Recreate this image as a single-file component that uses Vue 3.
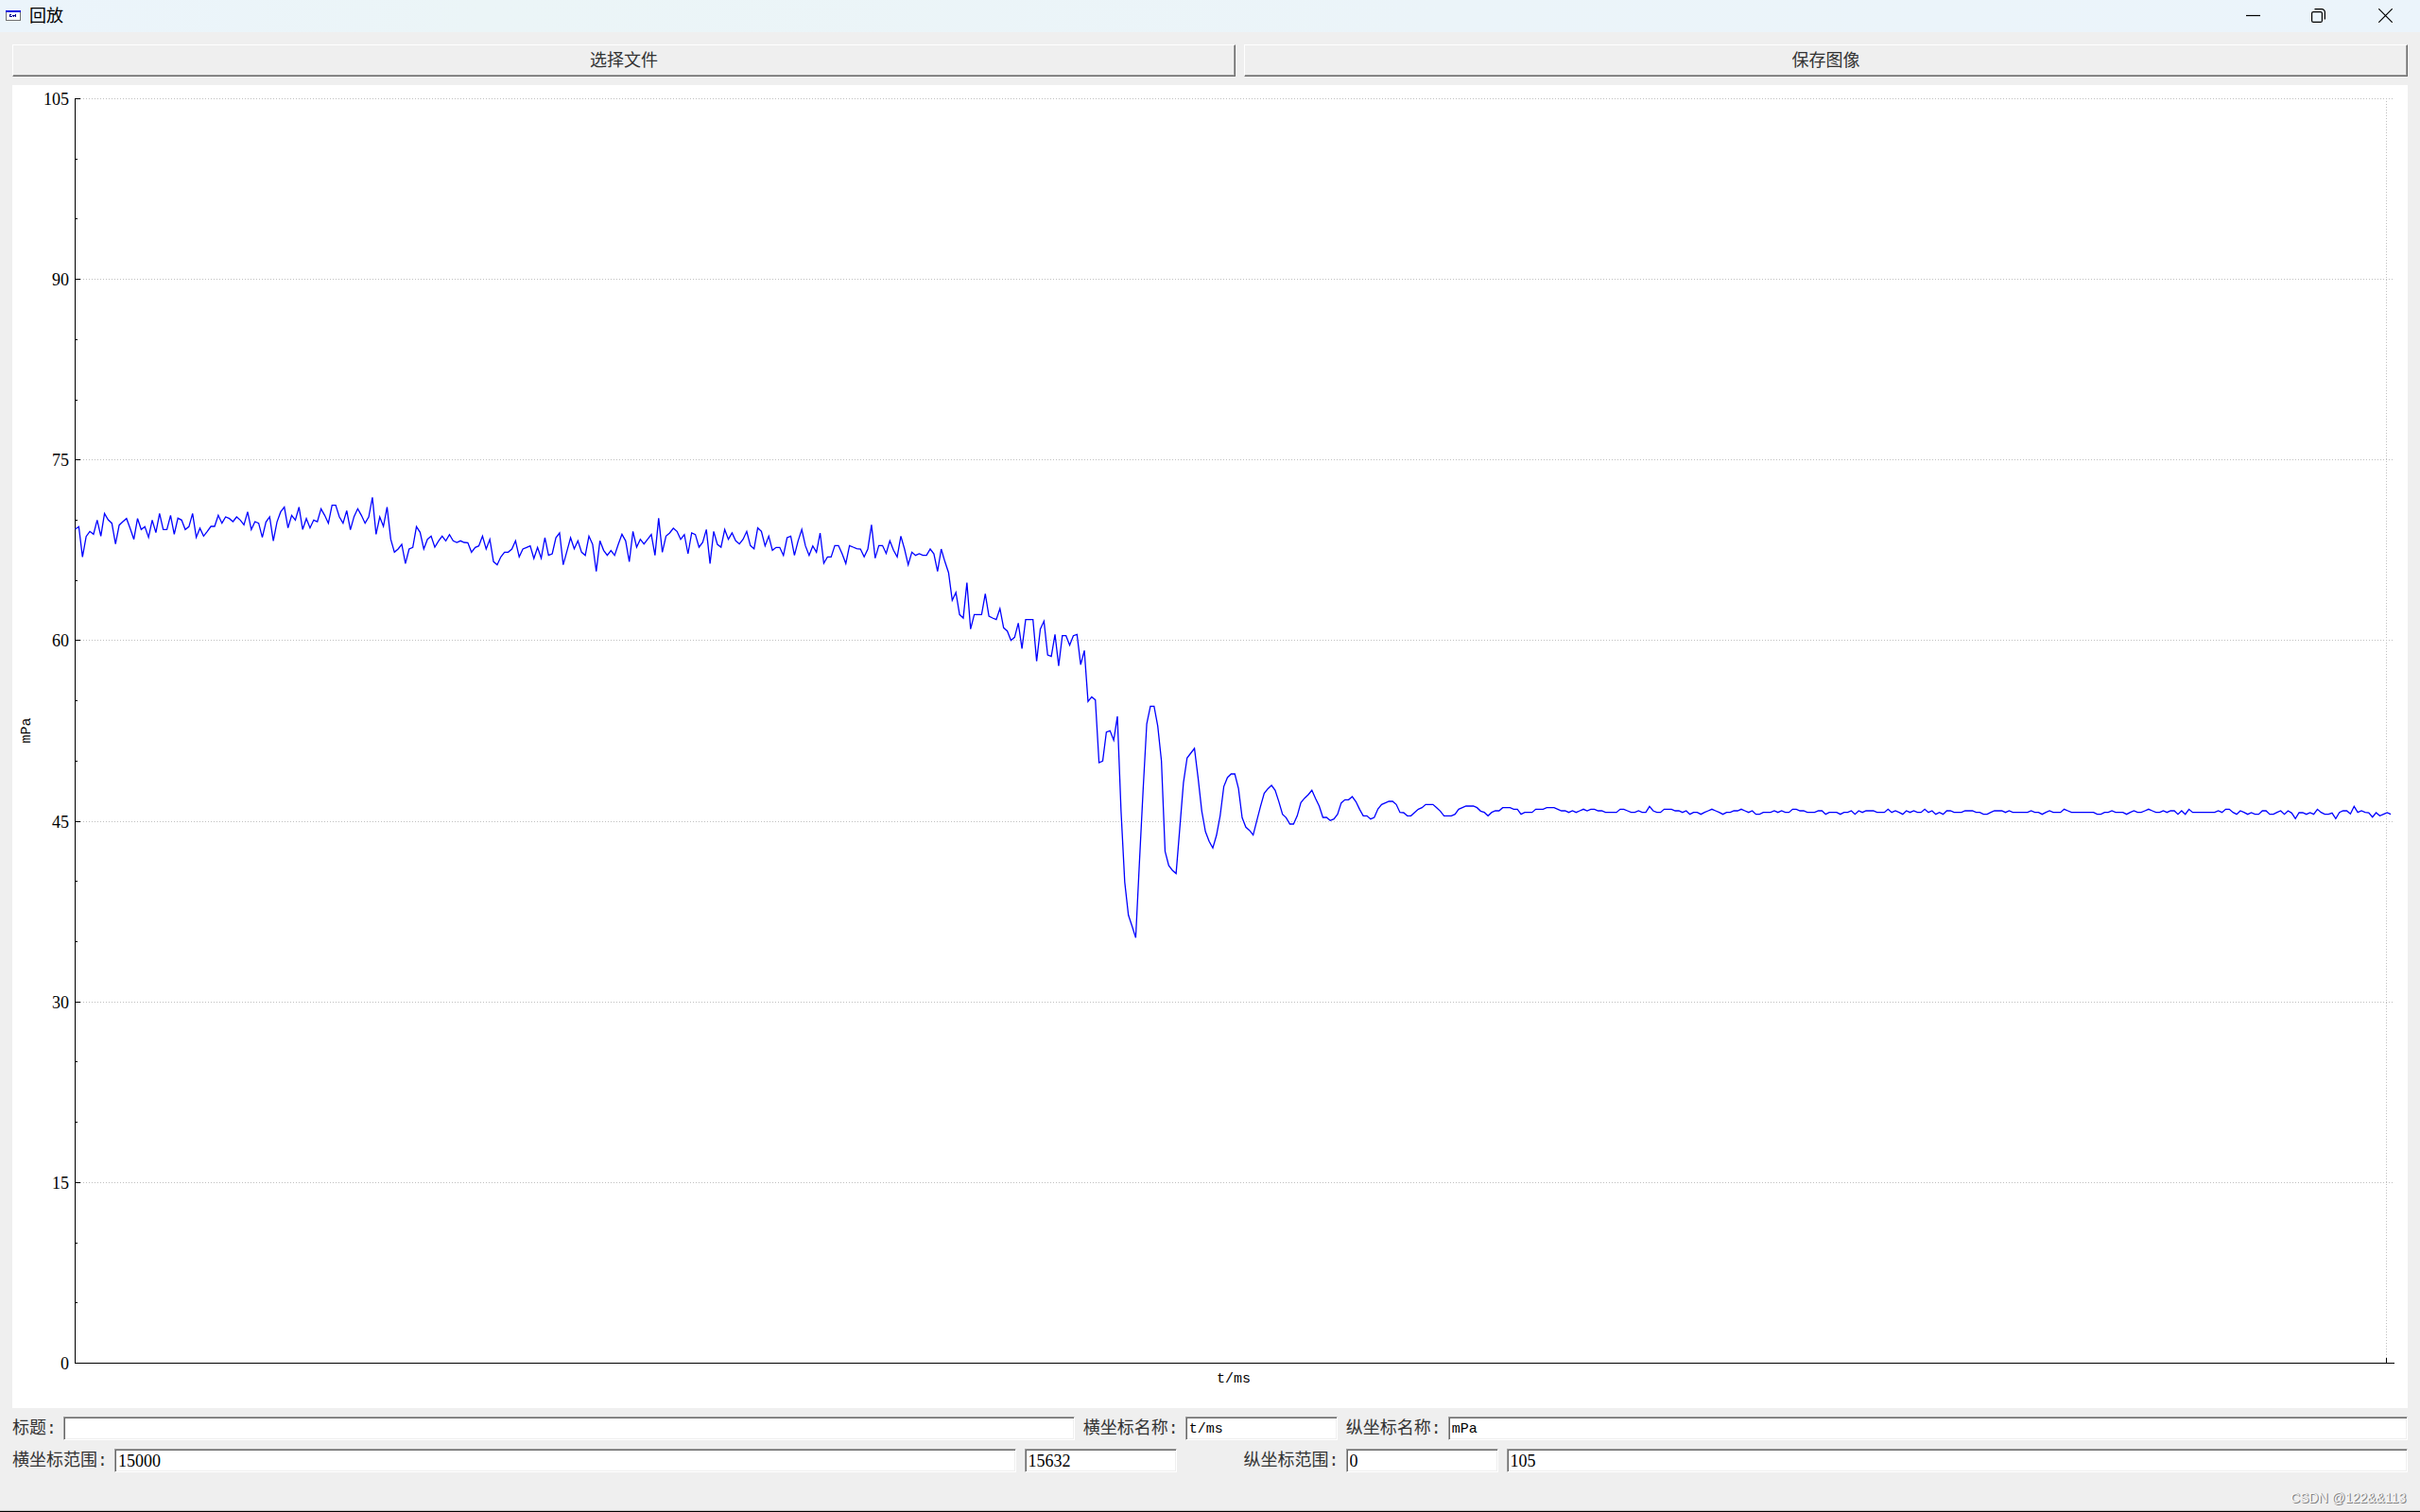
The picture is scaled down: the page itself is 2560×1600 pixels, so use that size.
<script setup>
import { ref } from 'vue'

const title = ref('')
const xName = ref('t/ms')
const yName = ref('mPa')
const xMin = ref('15000')
const xMax = ref('15632')
const yMin = ref('0')
const yMax = ref('105')

// Plot area inside the 2534 x 1400 chart
const left = 66.5
const right = 2520
const top = 14.5
const bottom = 1352.5
const stepX = (right - left) / 632

const toY = (value) => Math.round(bottom - 0.5 - (value / 105) * (bottom - top)) + 0.5
const majors = [0, 15, 30, 45, 60, 75, 90, 105].map((value) => ({ value, y: toY(value) }))
const minors = Array.from({ length: 21 }, (_, i) => i * 5)
  .filter((value) => value % 15)
  .map(toY)
const lastTickX = 2511.5

// Recorded samples, one per millisecond, in thirds of a chart unit below each segment's base
const segments = [
  {
    base: 410,
    samples: [
      180, 172, 268, 203, 187, 196, 151, 202, 130, 150, 161, 227, 167, 156, 146, 178, 212, 146, 181, 172,
      206, 151, 191, 130, 181, 181, 136, 196, 145, 151, 181, 172, 130, 206, 177, 202, 187, 171, 171, 136,
      161, 141, 146, 156, 141, 151, 166, 125, 181, 156, 161, 206, 157, 141, 217, 157, 125, 110, 176, 136,
      151, 110, 181, 146, 176, 151, 156, 115, 136, 161, 104, 104, 141, 161, 121, 182, 140, 115, 136, 161,
      141, 79, 196, 141, 171, 110, 212, 253, 243, 228, 289, 243, 238, 172, 190, 243, 212, 202, 237, 218,
      202, 217, 197, 217, 222, 217, 222, 223, 253, 238, 233, 202, 243, 212, 283, 293, 268, 253, 253, 243,
      217, 268, 243, 238, 233, 273, 238, 272, 207, 263, 258, 207, 192, 293, 250, 207, 242, 217, 253, 263,
      202, 228, 314, 217, 247, 263, 248, 263, 228, 196, 217, 283, 187, 237, 212, 227, 212, 197, 263, 145,
      253, 202, 192, 177, 187, 212, 197, 258, 192, 197, 237, 222, 181, 289, 187, 228, 237, 181, 212, 192,
      217, 227, 212, 187, 232, 242, 176, 187, 233, 202, 247, 238, 238, 263, 207, 202, 263, 217, 181, 233,
      263, 233, 253, 192, 288, 268, 268, 232, 232, 258, 289, 232, 237, 242, 243, 268, 243, 166, 272, 232,
      232, 257, 217, 247, 268, 202, 243, 293, 253, 263, 258, 263, 263, 243, 258, 314, 243, 283, 318
    ]
  },
  {
    base: 450,
    samples: [
      286, 261, 331, 342, 230, 377, 331, 331, 331, 265, 336, 342, 347, 312, 373, 383, 413, 403, 358, 439,
      347, 347, 347, 479, 377, 352, 459, 464, 394, 494, 398, 398, 428, 398, 394, 490, 445, 607, 592, 602,
      801, 796, 704, 700, 730, 654, 955, 1180, 1285, 1320, 1357, 1120, 890, 678, 622, 622, 685, 795, 1083,
      1128, 1143, 1153, 1010, 865, 786, 771
    ]
  },
  {
    base: 630,
    samples: [
      216, 310, 415, 480, 511, 532, 492, 430, 337, 308, 297, 297, 343, 436, 466, 476, 491, 445, 400, 359,
      344, 333, 349, 385, 425, 436, 456, 456, 430, 388, 374, 363, 349, 375, 399, 435, 435, 445, 440, 425,
      389, 379, 379, 369, 385, 409, 430, 430, 440, 435, 408, 394, 389, 384, 384, 394, 419, 420, 430, 430,
      419, 409, 404, 394, 394, 394, 404, 415, 430, 430, 430, 425, 409, 404, 399, 399, 399, 404, 415, 419,
      430, 419, 414, 414, 404, 404, 404, 409, 409, 425, 419, 419, 419, 409, 409, 409, 404, 404, 404, 409,
      414, 414, 419, 414, 419, 414, 409, 414
    ]
  },
  {
    base: 730,
    samples: [
      109, 109, 114, 114, 119, 119, 119, 119, 109, 109, 114, 119, 119, 114, 119, 119, 100, 114, 119, 119,
      109, 109, 109, 114, 114, 119, 114, 125, 119, 119, 125, 119, 114, 109, 114, 119, 125, 119, 119, 114,
      114, 109, 114, 119, 114, 125, 125, 119, 119, 119, 114, 119, 114, 119, 119, 109, 109, 114, 114, 119,
      119, 119, 114, 114, 125, 119, 119, 119, 125, 119, 119, 114, 125, 114, 119, 114, 114, 114, 119, 119,
      119, 109, 119, 114, 119, 125, 114, 119, 114, 119, 119, 109, 119, 114, 125, 119, 125, 114, 114, 119,
      119, 119, 114, 114, 114, 119, 119, 125, 125, 119, 114, 114, 114, 119, 114, 119, 119, 119, 119, 119,
      114, 119, 119, 125, 119, 114, 119, 119, 119, 109, 114, 119, 119, 119, 119, 119, 119, 119, 125, 125,
      119, 119, 114, 119, 119, 119, 125, 119, 114, 119, 119, 114, 109, 114, 119, 119, 114, 119, 114, 114,
      125, 114, 125, 109, 119, 119, 119, 119, 119, 119, 119, 114, 119, 109, 109, 119, 125, 114, 119, 125,
      120, 125, 125, 114, 114, 125, 125, 119, 114, 125, 114, 121, 139, 120, 120, 125, 120, 125, 109, 119,
      125, 125, 121, 139, 119, 114, 114, 124, 100, 119, 114, 119, 120, 134, 120, 130, 125, 120, 125
    ]
  }
]

const trace = segments
  .flatMap(({ base, samples }) => samples.map((s) => base + s / 3))
  .map((y, i) => `${(left + i * stepX).toFixed(2)},${y.toFixed(2)}`)
  .join(' ')
</script>

<template>
  <div class="window">
    <header class="titlebar">
      <svg class="app-icon" width="16" height="11" viewBox="0 0 16 11" shape-rendering="crispEdges" aria-hidden="true">
        <rect width="16" height="11" fill="#707070" />
        <rect x="1" y="2" width="14" height="8" fill="#fff" />
        <rect width="16" height="2" fill="#0000e0" />
        <path d="M4 4h2v1h-1v1h1v1h-2zM7 5h2v2h-1v-1h-1zM10 4h1v3h-1zM9 5h1v1h-1zM6 6h1v1h-1z" fill="#000090" />
      </svg>
      <h1 class="caption">回放</h1>
      <div class="controls">
        <button type="button" class="control" aria-label="最小化">
          <svg width="15" height="15" viewBox="0 0 15 15"><path d="M0 7.5h15" /></svg>
        </button>
        <button type="button" class="control" aria-label="还原">
          <svg width="15" height="15" viewBox="0 0 15 15">
            <rect x=".6" y="3.6" width="10.8" height="10.8" rx="1.5" />
            <path d="M3.5 .6h7.5a3.4 3.4 0 0 1 3.4 3.4v7.5" />
          </svg>
        </button>
        <button type="button" class="control close" aria-label="关闭">
          <svg width="15" height="15" viewBox="0 0 15 15"><path d="M.3 .3l14.4 14.4M14.7 .3L.3 14.7" /></svg>
        </button>
      </div>
    </header>

    <main class="content">
      <div class="actions">
        <button type="button" class="action open">选择文件</button>
        <button type="button" class="action save">保存图像</button>
      </div>

      <svg class="chart" viewBox="0 0 2534 1400" role="img">
        <g class="grid">
          <line v-for="m in majors.slice(1)" :key="m.value" x1="72" :y1="m.y" x2="2519" :y2="m.y" />
          <line :x1="lastTickX" y1="17" :x2="lastTickX" y2="1347" />
        </g>
        <g class="axes">
          <path :d="`M${left} 14V1353M66 ${bottom}H${right}`" />
          <line v-for="m in majors" :key="m.value" x1="66" :y1="m.y" x2="72" :y2="m.y" />
          <line v-for="y in minors" :key="y" x1="66" :y1="y" x2="69" :y2="y" />
          <line :x1="lastTickX" y1="1347" :x2="lastTickX" y2="1352" />
        </g>
        <g class="numbers">
          <text v-for="m in majors" :key="m.value" x="60" :y="m.y + 6">{{ m.value }}</text>
        </g>
        <text class="name" x="1292" y="1373">{{ xName }}</text>
        <text class="name" transform="translate(19 683) rotate(-90)">{{ yName }}</text>
        <polyline class="trace" :points="trace" />
      </svg>

      <div class="row">
        <label class="short" for="title">标题:</label>
        <input id="title" v-model="title" class="grow" type="text" />
        <label for="x-name">横坐标名称:</label>
        <input id="x-name" v-model="xName" class="name-input" type="text" />
        <label for="y-name">纵坐标名称:</label>
        <input id="y-name" v-model="yName" class="grow name-input" type="text" />
      </div>

      <div class="row">
        <label for="x-min">横坐标范围:</label>
        <input id="x-min" v-model="xMin" class="grow" type="text" />
        <input v-model="xMax" type="text" aria-label="横坐标最大值" />
        <label class="apart" for="y-min">纵坐标范围:</label>
        <input id="y-min" v-model="yMin" type="text" />
        <input v-model="yMax" class="grow" type="text" aria-label="纵坐标最大值" />
      </div>
    </main>

    <footer class="footer">CSDN @122&amp;&amp;113</footer>
  </div>
</template>

<style>
body {
  margin: 0;
  background: #efefef;
}
</style>

<style scoped>
.window {
  box-sizing: border-box;
  display: flex;
  flex-direction: column;
  min-height: 100vh;
  border-bottom: 1px solid #000;
  background: #efefef;
  color: #000;
  font: 18px/24px "Liberation Serif", "Noto Sans CJK SC", serif;
}

.titlebar {
  box-sizing: border-box;
  display: flex;
  align-items: center;
  height: 34px;
  padding: 0 0 1px 6px;
  background: linear-gradient(90deg, #ebf4fb, #ebf5f7 20%, #ebf4f9 60%, #ebf4fb);
}

.app-icon {
  flex: none;
}

.caption {
  margin: 0 auto 0 9px;
  padding-bottom: 2px;
  font: 18px/23px "Noto Sans CJK SC", sans-serif;
}

.controls {
  display: flex;
}

.control {
  display: flex;
  align-items: center;
  justify-content: center;
  width: 69px;
  height: 33px;
  padding: 0;
  border: 0;
  background: none;
}

.close {
  width: 73px;
}

.control svg {
  fill: none;
  stroke: #000;
  stroke-width: 1.2;
}

.content {
  display: flex;
  flex-direction: column;
  gap: 9px;
  padding: 13px 13px 0;
}

.actions,
.row {
  display: flex;
  gap: 9px;
}

.action {
  height: 34px;
  padding: 0;
  border: 1px solid;
  border-color: #fff #696969 #696969 #fff;
  background: #efefef;
  box-shadow: inset -1px -1px #a0a0a0;
  color: #333;
  font: inherit;
}

.open {
  flex: 1294 1 0;
}

.save {
  flex: 1231 1 0;
}

.chart {
  display: block;
  width: 100%;
  height: auto;
  background: #fff;
}

.grid {
  stroke: #c0c0c0;
  stroke-dasharray: 1 2;
  shape-rendering: crispEdges;
}

.axes {
  fill: none;
  stroke: #000;
  shape-rendering: crispEdges;
}

.numbers {
  text-anchor: end;
}

.name {
  font: 15px "Liberation Mono", monospace;
  text-anchor: middle;
}

.trace {
  fill: none;
  stroke: #00f;
  stroke-width: 1.3;
}

.row {
  height: 25px;
}

label {
  flex: none;
  width: 99px;
  color: #333;
  font: 18px/26px "Liberation Mono", "Noto Sans CJK SC", monospace;
  white-space: nowrap;
}

.short {
  width: 45px;
}

.apart {
  margin-left: 62px;
}

input {
  box-sizing: border-box;
  flex: none;
  width: 161px;
  min-width: 0;
  height: 25px;
  padding: 2px 3px 0;
  border: 1px solid;
  border-color: #a0a0a0 #fff #fff #a0a0a0;
  outline: 0;
  background: #fff;
  box-shadow: inset 1px 1px #696969, inset -1px -1px #efefef;
  color: #000;
  font: inherit;
}

.name-input {
  font: 15px "Liberation Mono", monospace;
}

.grow {
  flex: 1 1 0;
}

#title {
  flex-grow: 1070;
}

#y-name {
  flex-grow: 1015;
}

.footer {
  display: flex;
  flex: 1;
  align-items: flex-end;
  justify-content: flex-end;
  padding: 16px 15px 4px;
  border-bottom: 1px solid #c8c8c8;
  color: #f8f8f8;
  font: 14px/18px "Liberation Sans", sans-serif;
  text-shadow: 1px 1px #808080, 1px 0 #a0a0a0;
}
</style>
